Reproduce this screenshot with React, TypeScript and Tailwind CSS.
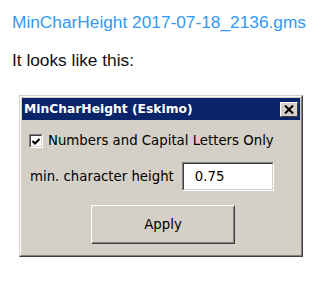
import React from "react";

export default function App() {
  return (
    <div className="w-[329px] h-[284px] bg-white pl-[12px] pt-[12px] font-['Liberation_Sans',Arial,sans-serif]">
      <div className="text-[17.3px] leading-[20px] text-[#3399ee]">MinCharHeight 2017-07-18_2136.gms</div>
      <p className="mt-[18px] text-[17.3px] leading-[20px] text-[#111]">It looks like this:</p>
      <div className="mt-[25px] ml-[7px] w-[284px] border border-t-[#d4d0c8] border-l-[#d4d0c8] border-b-[#404040] border-r-[#404040]">
        <div className="border border-t-white border-l-white border-b-[#808080] border-r-[#808080] bg-[#d4d0c8] p-[1px] font-['DejaVu_Sans',sans-serif] text-black">
          <div className="h-[22px] bg-[#0a246a] flex items-center justify-between pl-[2px] pr-[2px]">
            <span className="text-white font-bold text-[12.3px] leading-none">MinCharHeight (Eskimo)</span>
            <div className="w-[18px] h-[15px] bg-[#d4d0c8] border border-t-white border-l-white border-b-[#404040] border-r-[#404040] flex items-center justify-center">
              <svg width="10" height="9" viewBox="0 0 10 9">
                <path d="M1 0.5 L9 8.5 M9 0.5 L1 8.5" stroke="black" strokeWidth="2" />
              </svg>
            </div>
          </div>
          <div className="flex flex-col px-[7px]">
            <div className="mt-[13px] h-[16px] flex items-center gap-[5px]">
              <div className="w-[14px] h-[14px] bg-white border border-t-[#808080] border-l-[#808080] border-b-white border-r-white">
                <div className="w-full h-full border border-t-[#404040] border-l-[#404040] border-b-[#d4d0c8] border-r-[#d4d0c8] flex items-center justify-center">
                  <svg width="8" height="7" viewBox="0 0 8 7">
                    <path d="M0.5 3 L3 5.5 L7.5 1" stroke="black" strokeWidth="2" fill="none" />
                  </svg>
                </div>
              </div>
              <span className="text-[13.3px] leading-none">Numbers and Capital Letters Only</span>
            </div>
            <div className="mt-[13px] flex items-center">
              <span className="text-[13.3px] leading-none ml-[1px]">min. character height</span>
              <div className="ml-[8px] w-[92px] h-[29px] bg-white border border-t-[#808080] border-l-[#808080] border-b-white border-r-white">
                <div className="w-full h-full border border-t-[#404040] border-l-[#404040] border-b-[#d4d0c8] border-r-[#d4d0c8] flex items-center pl-[11px] text-[13.3px]">
                  0.75
                </div>
              </div>
            </div>
            <div className="mt-[14px] mb-[10px] ml-[62px] w-[144px] h-[39px] border border-t-white border-l-white border-b-[#404040] border-r-[#404040]">
              <div className="w-full h-full border border-t-[#d4d0c8] border-l-[#d4d0c8] border-b-[#808080] border-r-[#808080] flex items-center justify-center text-[13.3px]">
                Apply
              </div>
            </div>
          </div>
        </div>
      </div>
    </div>
  );
}
